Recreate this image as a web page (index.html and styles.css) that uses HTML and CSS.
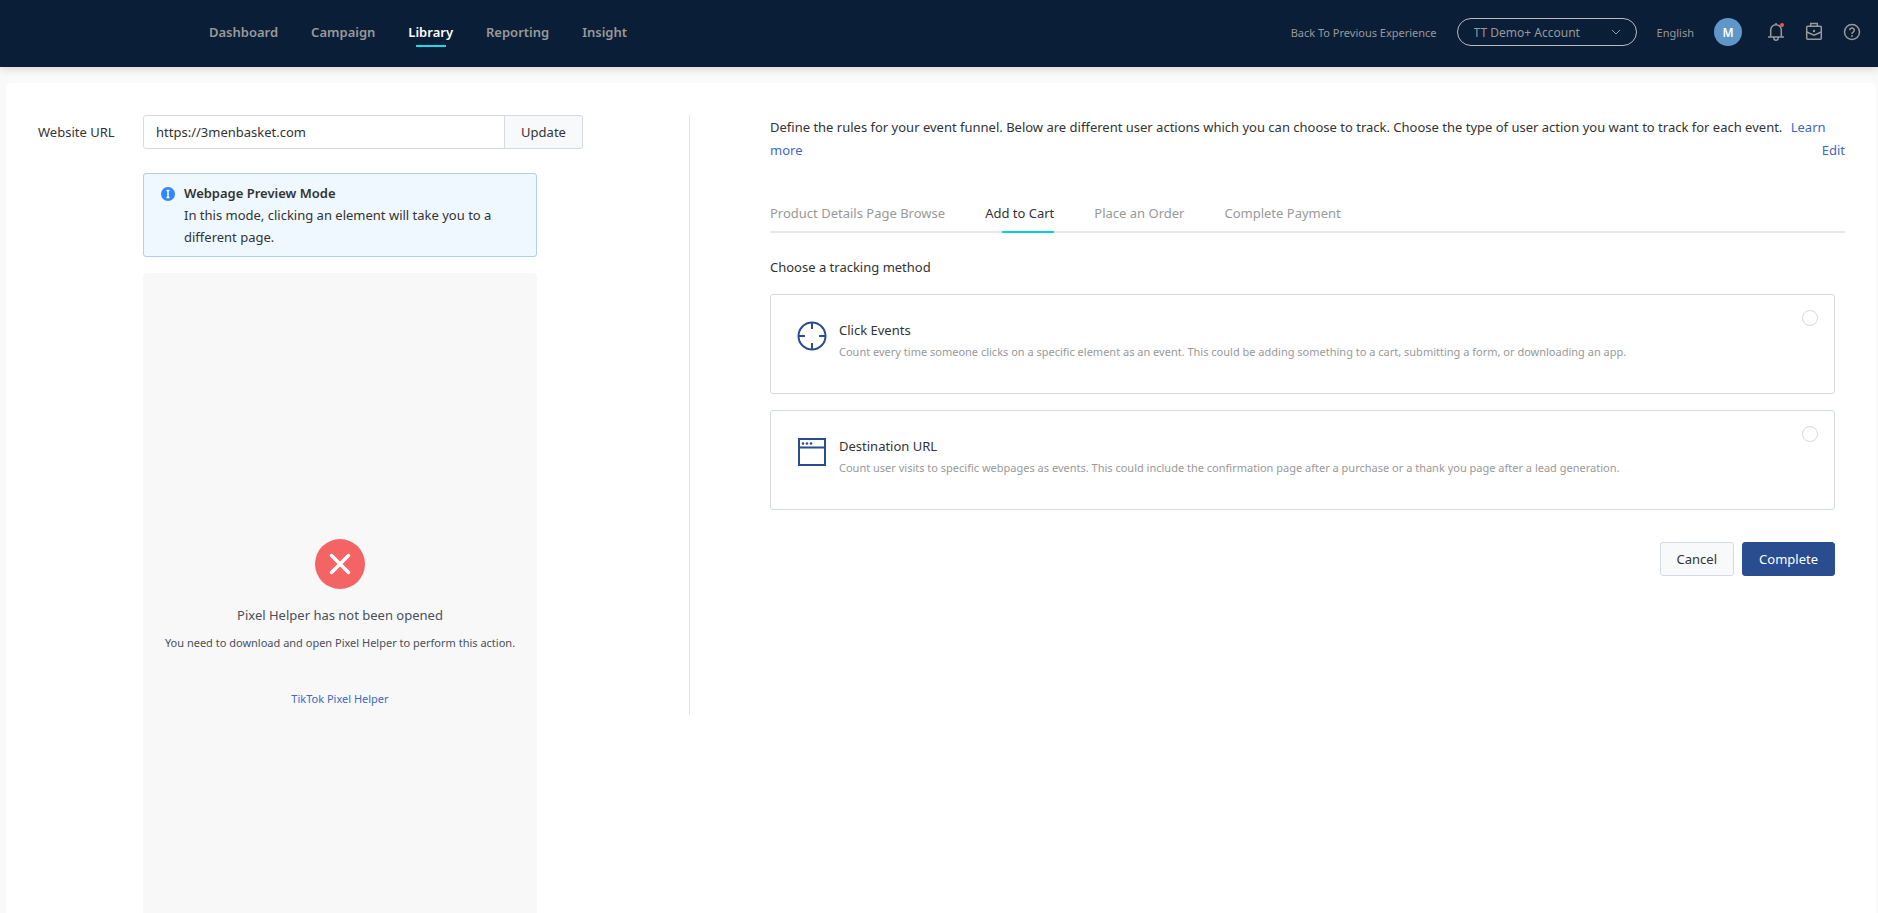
FILE: index.html
```html
<!DOCTYPE html>
<html lang="en">
<head>
    <meta charset="UTF-8">
    <title>Event Builder</title>
    <link rel="stylesheet" href="styles.css">
</head>
<body>
    <header class="header">
        <nav class="nav">
            <a href="#">Dashboard</a>
            <a href="#">Campaign</a>
            <a href="#" class="active">Library</a>
            <a href="#">Reporting</a>
            <a href="#">Insight</a>
        </nav>
        <div class="header-right">
            <a href="#" class="back">Back To Previous Experience</a>
            <div class="account">
                <select aria-label="Account">
                    <option>TT Demo+ Account</option>
                </select>
                <svg class="chevron" width="10" height="6" viewBox="0 0 10 6"><path d="M1 1l4 4 4-4"/></svg>
            </div>
            <a href="#" class="language">English</a>
            <button class="avatar">M</button>
            <div class="icons">
                <button class="icon" aria-label="Notifications">
                    <svg width="16" height="18" viewBox="0 0 16 18">
                        <path d="M0 14h16M2.700 14V7a5.300 5.300 0 0 1 10.600 0v7M8 1.700V0M5.700 14.500a2.300 2.700 0 0 0 4.600 0"/>
                        <circle class="dot" cx="14" cy="2" r="2"/>
                    </svg>
                </button>
                <button class="icon" aria-label="Business center">
                    <svg width="16" height="18" viewBox="0 0 16 18">
                        <rect x="0.700" y="3.200" width="14.600" height="13" rx="1"/>
                        <path d="M4.700 3.200V.5h6.600v2.700M.7 9l7.300 3.200L15.300 9"/>
                        <circle class="fill" cx="8" cy="8" r="1.200"/>
                    </svg>
                </button>
                <button class="icon" aria-label="Help">
                    <svg width="16" height="18" viewBox="0 0 16 18">
                        <circle cx="8" cy="9" r="7.500"/>
                        <path d="M5.700 7.300a2.300 2.300 0 1 1 3.500 1.900c-.8.500-1.200.8-1.200 1.900"/>
                        <circle class="fill" cx="8" cy="13" r=".9"/>
                    </svg>
                </button>
            </div>
        </div>
    </header>

    <main class="panel">
        <section class="left">
            <label for="site-url" class="url-label">Website URL</label>
            <div class="url-group">
                <input type="text" id="site-url" value="https://3menbasket.com">
                <button>Update</button>
            </div>

            <div class="notice">
                <svg width="14" height="14" viewBox="0 0 14 14">
                    <circle cx="7" cy="7" r="7" fill="#2f88ff"/>
                    <path d="M5.500 3.500h3M7 3.500v7M5.500 10.500h3" stroke="#fff" stroke-width="1.500"/>
                </svg>
                <div>
                    <strong>Webpage Preview Mode</strong>
                    <p>In this mode, clicking an element will take you to a different page.</p>
                </div>
            </div>

            <div class="preview">
                <svg width="50" height="50" viewBox="0 0 50 50">
                    <circle cx="25" cy="25" r="25" fill="#f56464"/>
                    <path d="M16.500 16.500l17 17M33.500 16.500l-17 17" stroke="#fff" stroke-width="3.500" stroke-linecap="round"/>
                </svg>
                <h3>Pixel Helper has not been opened</h3>
                <p>You need to download and open Pixel Helper to perform this action.</p>
                <a href="#">TikTok Pixel Helper</a>
            </div>
        </section>

        <section class="right">
            <div class="intro">
                Define the rules for your event funnel. Below are different user actions which you can choose to track. Choose the type of user action you want to track for each event.
                <a href="#" class="learn">Learn more</a>
                <a href="#" class="edit">Edit</a>
            </div>

            <div class="tabs">
                <button>Product Details Page Browse</button>
                <button class="active">Add to Cart</button>
                <button>Place an Order</button>
                <button>Complete Payment</button>
            </div>

            <form class="methods">
                <h3>Choose a tracking method</h3>
                <label class="card">
                    <svg width="30" height="30" viewBox="0 0 30 30">
                        <circle cx="15" cy="15" r="13.500"/>
                        <path d="M15 1v7M15 22v7M1 15h7M22 15h7"/>
                    </svg>
                    <span class="card-text">
                        <span class="card-title">Click Events</span>
                        <span class="card-desc">Count every time someone clicks on a specific element as an event. This could be adding something to a cart, submitting a form, or downloading an app.</span>
                    </span>
                    <input type="radio" name="method">
                </label>
                <label class="card">
                    <svg width="30" height="30" viewBox="0 0 30 30">
                        <path d="M2 2h26v26H2zM2 10.500h26"/>
                        <circle class="dots" cx="6" cy="6.500" r="1.300"/>
                        <circle class="dots" cx="10" cy="6.500" r="1.300"/>
                        <circle class="dots" cx="14" cy="6.500" r="1.300"/>
                    </svg>
                    <span class="card-text">
                        <span class="card-title">Destination URL</span>
                        <span class="card-desc">Count user visits to specific webpages as events. This could include the confirmation page after a purchase or a thank you page after a lead generation.</span>
                    </span>
                    <input type="radio" name="method">
                </label>
                <div class="actions">
                    <button type="button" class="button">Cancel</button>
                    <button type="button" class="button primary">Complete</button>
                </div>
            </form>
        </section>
    </main>
</body>
</html>
```

FILE: styles.css
```css
* { box-sizing: border-box; }
body { margin: 0; min-height: 100vh; display: flex; flex-direction: column; font-family: "Noto Sans", "Open Sans", sans-serif; font-size: 13px; color: #333; background: #f9f9f9; }
a { color: #3e6ac4; text-decoration: none; }
button, input, select { font: inherit; color: inherit; }
button { cursor: pointer; }
h3, p { margin: 0; font-weight: normal; }

/* top bar */
.header { display: flex; justify-content: space-between; align-items: center; height: 67px; padding: 0 18px 3px 209px; background: #0b1e38; box-shadow: 0 2px 8px rgba(0,0,0,0.15); }
.nav { display: flex; gap: 33px; }
.nav a { position: relative; color: #999; font-weight: 600; }
.nav a.active { color: #fff; }
.nav a.active::after { content: ""; position: absolute; left: 50%; bottom: -6px; width: 30px; height: 2px; margin-left: -15px; background: #15dfe8; }
.header-right { display: flex; align-items: center; gap: 20px; font-size: 11px; }
.header-right a { color: #999; }
.account { position: relative; }
.account select { appearance: none; display: block; width: 180px; height: 28px; padding: 0 30px 0 16px; border: 1px solid #bbb; border-radius: 14px; background: none; color: #999; font-size: 12px; }
.chevron { position: absolute; right: 16px; top: 11px; fill: none; stroke: #999; pointer-events: none; }
.avatar { width: 28px; height: 28px; padding: 0; border: none; border-radius: 50%; background: #6197c8; color: #fff; font-size: 12px; font-weight: 600; }
.icons { display: flex; gap: 22px; margin-left: 6px; }
.icon { padding: 0; border: none; background: none; }
.icon svg { display: block; overflow: visible; fill: none; stroke: #999; stroke-width: 1.5; }
.icon .dot { fill: #fa5252; stroke: none; }
.icon .fill { fill: #999; stroke: none; }

.panel { flex: 1; display: flex; margin: 16px 2px 0 6px; padding: 32px 31px 0 32px; background: #fff; border-radius: 4px 4px 0 0; }

/* website preview */
.left { display: grid; grid-template-columns: 105px 394px 46px; grid-template-rows: auto auto 1fr; }
.url-label { align-self: center; }
.url-group { grid-column: 2 / 4; display: flex; }
.url-group input { flex: 1; min-width: 0; height: 34px; padding: 0 12px; border: 1px solid #d5dbe0; border-radius: 3px 0 0 3px; background: #fff; }
.url-group button { width: 79px; height: 34px; margin-left: -1px; border: 1px solid #d5dbe0; border-radius: 0 3px 3px 0; background: #f8f9fb; }
.notice { grid-column: 2; display: flex; gap: 9px; margin-top: 24px; padding: 8px 16px; height: 84px; border: 1px solid #b3cde9; border-radius: 3px; background: #eff8ff; line-height: 22px; }
.notice svg { flex: none; margin-top: 5px; margin-left: 1px; }
.notice strong { font-weight: 600; }
.preview { grid-column: 2; display: flex; flex-direction: column; align-items: center; margin-top: 16px; padding-top: 266px; background: #f8f8f8; border-radius: 4px 4px 0 0; color: #4a4f5c; font-size: 11px; line-height: 18px; }
.preview h3 { margin: 17px 0 10px; font-size: 13px; }
.preview a { margin-top: 38px; }

/* event rules */
.right { flex: 1; display: flex; flex-direction: column; align-items: stretch; align-self: flex-start; min-height: 600px; margin-left: 106px; padding-left: 80px; border-left: 1px solid #e5e5e5; }
.intro { padding-top: 1px; line-height: 23px; }
.learn { margin-left: 5px; }
.edit { float: right; }
.tabs { display: flex; gap: 40px; margin-top: 41px; border-bottom: 2px solid #e6eaed; }
.tabs button { position: relative; padding: 0 0 8px; border: none; background: none; color: #999; line-height: 20px; }
.tabs button.active { color: #333; }
.tabs button.active::after { content: ""; position: absolute; right: 0; bottom: -2px; width: 52px; height: 2px; background: #00d5dc; }
.methods { display: flex; flex-direction: column; gap: 16px; margin-right: 10px; padding-top: 24px; }
.methods h3 { font-size: 13px; line-height: 21px; }
.card { display: flex; align-items: flex-start; gap: 12px; height: 100px; padding: 15px 16px 0 26px; border: 1px solid #d5dbe0; border-radius: 3px; }
.card svg { flex: none; margin-top: 11px; fill: none; stroke: #294d8f; stroke-width: 2; }
.card .dots { fill: #294d8f; stroke: none; }
.card-text { flex: 1; padding-top: 9px; line-height: 22px; }
.card-title, .card-desc { display: block; }
.card-desc { color: #999; font-size: 11px; }
.card input { appearance: none; width: 16px; height: 16px; margin: 0; border: 1px solid #d5dbe0; border-radius: 50%; background: #fff; }
.card input:checked { border: 5px solid #294d8f; }
.actions { display: flex; justify-content: flex-end; gap: 8px; padding-top: 16px; }
.button { height: 34px; padding: 0 16px; border: 1px solid #d5dbe0; border-radius: 3px; background: #f8f9fb; }
.primary { border-color: #294d8f; background: #294d8f; color: #fff; }
```
